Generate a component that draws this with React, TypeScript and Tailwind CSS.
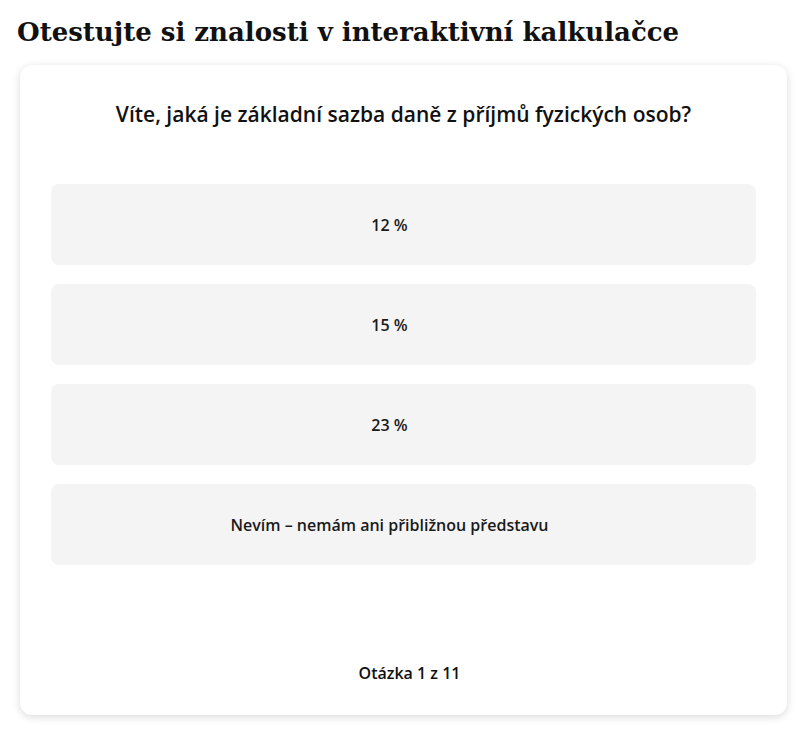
export default function App() {
  const options = ["12 %", "15 %", "23 %", "Nevím – nemám ani přibližnou představu"];
  return (
    <div className="min-h-screen bg-white px-[17px] pt-[14px]" style={{ fontFamily: '"Open Sans", "Noto Sans", sans-serif' }}>
      <h2
        className="text-[26px] font-bold leading-[36px] text-[#111111]"
        style={{ fontFamily: '"DejaVu Serif", "Liberation Serif", serif' }}
      >
        Otestujte si znalosti v interaktivní kalkulačce
      </h2>
      <div className="ml-[3px] mt-[15px] rounded-xl bg-white px-[31px] pb-[30px] pt-[34px] shadow-[0_2px_8px_rgba(0,0,0,0.15)]">
        <p className="text-center text-[21px] font-semibold leading-[30px] text-[#111111]">
          Víte, jaká je základní sazba daně z příjmů fyzických osob?
        </p>
        <div className="mt-[55px] flex flex-col gap-[19px]">
          {options.map((o) => (
            <button
              key={o}
              className="flex h-[81px] items-center justify-center rounded-lg bg-[#f4f4f4] pr-[28px] text-[16px] font-semibold text-[#1a1a1a]"
            >
              {o}
            </button>
          ))}
        </div>
        <p className="mt-[96px] pl-[12px] text-center text-[16px] font-semibold leading-[24px] text-[#111111]">
          Otázka 1 z 11
        </p>
      </div>
    </div>
  );
}
